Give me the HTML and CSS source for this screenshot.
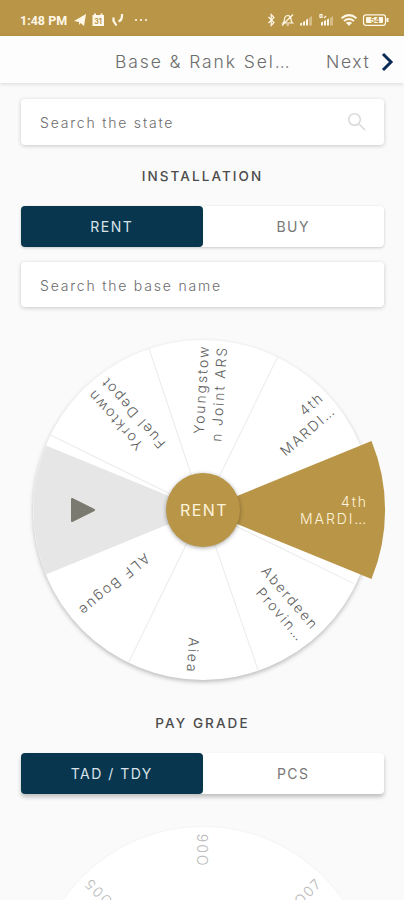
FILE: index.html
```html
<!DOCTYPE html>
<html lang="en">

<head>
    <meta charset="UTF-8">
    <meta name="viewport" content="width=device-width, initial-scale=1.0">
    <title>Base & Rank Selection</title>
    <link rel="stylesheet" href="styles.css">
</head>

<body>
    <div class="status-bar">
        <span class="time">1:48 PM</span>
        <svg class="status-left" width="76" height="14" viewBox="0 0 76 14">
            <path d="M0 8 L12 1 L10 13 L6.500 10 L5 12 V9 Z"/>
            <path d="M18.500 2 H30 V13 H18.500 Z M20 .5 h2 v2 h-2z M26.500 .5 h2 v2 h-2z"/>
            <text x="20.200" y="10.500" class="cal-day">31</text>
            <path class="line" d="M39.500 4.500 V8 L42.500 12.500 M44.500 8.500 Q48.500 7 48 1"/>
            <circle cx="62" cy="7" r="1.100"/>
            <circle cx="67" cy="7" r="1.100"/>
            <circle cx="72" cy="7" r="1.100"/>
        </svg>
        <svg class="status-right" width="124" height="14" viewBox="0 0 124 14">
            <path class="thin" d="M3.500 4 L9 9.500 L6.200 12.500 V1.500 L9 4.500 L3.500 10"/>
            <path class="thin" d="M18 10 Q19.500 9 19.500 6 Q20 2.500 23 2.500 Q26 3 26 6 Q26 9 27.500 10 Z M21.500 12 H24 M28 1.500 L17 12.500"/>
            <path d="M35 12.500 V10.500 L37 9.500 V12.500 Z M38 12.500 V9 L40 8 V12.500 Z M41 12.500 V7 L43 5.500 V12.500 Z"/>
            <path class="dim" d="M44 12.500 V5 L47 3 V12.500 Z"/>
            <path class="thin" d="M55 1.500 h2 v3 h-2 z M59 5 l2 -2"/>
            <path d="M56 12.500 V9.500 L58 8.500 V12.500 Z M59 12.500 V8 L61 7 V12.500 Z M62 12.500 V6.500 L64 5.500 V12.500 Z"/>
            <path class="dim" d="M65 12.500 V5 L68 3 V12.500 Z"/>
            <path class="wifi" d="M76.500 5.200 Q84 -1 91.500 5.200 M79 8 Q84 4 89 8 M81.500 10.500 Q84 8.800 86.500 10.500"/>
            <path d="M82 10.500 h4 l-2 2.500 z"/>
            <rect class="thin" x="98.500" y="1.800" width="22" height="10.500" rx="2.500"/>
            <rect x="101" y="4" width="17" height="6" rx="1"/>
            <text x="105.500" y="9.700" class="battery">54</text>
            <rect x="121.500" y="5" width="2" height="4"/>
        </svg>
    </div>

    <header class="header">
        <h1>Base &amp; Rank Sel…</h1>
        <span class="next">Next</span>
        <svg class="chevron" width="13" height="20" viewBox="0 0 13 20">
            <path d="M2 2 L10 10 L2 18"/>
        </svg>
    </header>

    <main class="container">
        <div class="field">
            <span>Search the state</span>
            <svg width="20" height="20" viewBox="0 0 20 20">
                <circle cx="7.500" cy="7.500" r="5.800"/>
                <path d="M11.800 11.800 L18 18"/>
            </svg>
        </div>

        <h2>INSTALLATION</h2>
        <div class="toggle">
            <button class="active">RENT</button>
            <button>BUY</button>
        </div>

        <div class="field base-field">
            <span>Search the base name</span>
        </div>

        <!-- slices are 45 degrees each, origin is the hub -->
        <svg class="wheel" width="364" height="364" viewBox="-182 -182 364 364">
            <circle class="disc" r="170"/>
            <g class="spokes">
                <path d="M0 0 L170 0" transform="rotate(-64)"/>
                <path d="M0 0 L170 0" transform="rotate(-108.500)"/>
                <path d="M0 0 L170 0" transform="rotate(-153.800)"/>
                <path d="M0 0 L170 0" transform="rotate(116)"/>
                <path d="M0 0 L170 0" transform="rotate(71)"/>
                <path d="M0 0 L168 0" transform="rotate(26)"/>
            </g>
            <path class="pointer-slice" d="M0 0 L-157 -64.500 A169.700 169.700 0 0 0 -157 64.500 Z"/>
            <path class="play" d="M-131 -11 L-109 0 L-131 11 Z"/>
            <path class="selected" d="M0 0 L168.500 -69 A182 182 0 0 1 168.500 69 Z"/>

            <g class="labels">
                <g transform="rotate(-41)">
                    <text x="165" y="-4">4th</text>
                    <text x="165" y="14">MARDI…</text>
                </g>
                <g transform="rotate(-86.500)">
                    <text x="165" y="-4">Youngstow</text>
                    <text x="165" y="14">n Joint ARS</text>
                </g>
                <g transform="rotate(-131.500)">
                    <text x="164" y="-1">Yorktown</text>
                    <text x="164" y="17">Fuel Depot</text>
                </g>
                <g transform="rotate(49)">
                    <text x="163" y="-3">Aberdeen</text>
                    <text x="163" y="15">Provin…</text>
                </g>
                <text x="164" y="5" transform="rotate(94)">Aiea</text>
                <text x="161" y="5" transform="rotate(140)">ALF Bogue</text>
                <g class="on-gold">
                    <text x="165" y="-3">4th</text>
                    <text x="165" y="14">MARDI…</text>
                </g>
            </g>

            <circle class="hub" r="37"/>
            <text class="hub-label" x="1" y="6">RENT</text>
        </svg>

        <h2 class="pay-title">PAY GRADE</h2>
        <div class="toggle raised">
            <button class="active">TAD / TDY</button>
            <button>PCS</button>
        </div>

        <svg class="wheel pay-wheel" width="364" height="364" viewBox="-182 -182 364 364">
            <circle class="disc" r="170"/>
            <g class="labels">
                <text x="165" y="5" transform="rotate(-135)">O05</text>
                <text x="165" y="5" transform="rotate(-90)">O06</text>
                <text x="165" y="5" transform="rotate(-45)">O07</text>
            </g>
        </svg>
    </main>
</body>

</html>
```
FILE: styles.css
```css
:root {
    --gold: #b99547;
    --navy: #08364f;
    --background: #fafafa;
    --text: #6c6c6c;
}

* {
    box-sizing: border-box;
}

body {
    font-family: Inter, Roboto, sans-serif;
    margin: 0;
    height: 900px;
    overflow: hidden;
    background-color: var(--background);
    color: var(--text);
    display: flex;
    flex-direction: column;
}

.status-bar {
    flex: none;
    height: 36px;
    background-color: var(--gold);
    color: #fff8e8;
    display: flex;
    align-items: center;
    padding: 4px 15px 0 20px;
}

.status-bar svg {
    fill: #fff8e8;
}

.time {
    font-family: Roboto, sans-serif;
    font-size: 12.5px;
    font-weight: 700;
    width: 54px;
    white-space: nowrap;
}

.status-right {
    margin-left: auto;
}

.status-bar .line {
    fill: none;
    stroke: #fff8e8;
    stroke-width: 2.2;
}

.status-bar .thin {
    fill: none;
    stroke: #fff8e8;
    stroke-width: 1.2;
}

.status-bar .wifi {
    fill: none;
    stroke: #fff8e8;
    stroke-width: 2;
}

.status-bar .dim {
    opacity: 0.4;
}

.status-bar .cal-day,
.status-bar .battery {
    fill: var(--gold);
    font-size: 7px;
    font-weight: 700;
}

.header {
    flex: none;
    height: 47px;
    background-color: #fdfdfd;
    box-shadow: 0 1px 4px rgba(0, 0, 0, 0.14);
    display: flex;
    align-items: center;
    padding: 4px 10px 0 115px;
}

.header h1,
.next {
    margin: 0;
    font-size: 17.5px;
    font-weight: 300;
    letter-spacing: 1.9px;
    white-space: nowrap;
}

.header h1 {
    width: 211px;
}

.next {
    letter-spacing: 1.6px;
}

.chevron {
    margin-left: auto;
    fill: none;
    stroke: #0b2a55;
    stroke-width: 3;
}

.container {
    flex: none;
    padding: 16px 20px 0 21px;
    display: flex;
    flex-direction: column;
}

.field {
    height: 46px;
    background-color: #fff;
    border-radius: 4px;
    box-shadow: 0 1px 4px rgba(0, 0, 0, 0.2);
    display: flex;
    align-items: center;
    justify-content: space-between;
    padding: 0 17px 0 19px;
    font-size: 14px;
    font-weight: 300;
    letter-spacing: 1.8px;
}

.field svg {
    fill: none;
    stroke: #dadada;
    stroke-width: 1.6;
}

h2 {
    margin: 21px 0;
    height: 19px;
    line-height: 20px;
    text-align: center;
    font-size: 13.5px;
    font-weight: 500;
    letter-spacing: 2.1px;
    color: #4b4b4b;
}

.toggle {
    display: flex;
    height: 41px;
    background-color: #fff;
    border-radius: 4px;
    box-shadow: 0 1px 3px rgba(0, 0, 0, 0.2);
}

.toggle.raised {
    box-shadow: 0 3px 4px rgba(0, 0, 0, 0.24);
}

.toggle button {
    flex: 1;
    border: none;
    border-radius: 4px;
    padding: 0 0 1px;
    background: transparent;
    font-family: inherit;
    font-size: 14px;
    font-weight: 400;
    letter-spacing: 1.5px;
    color: #777;
}

.toggle .active {
    background-color: var(--navy);
    color: #d9e2e8;
}

.base-field {
    margin-top: 15px;
    height: 45px;
    padding-top: 1px;
}

.wheel {
    align-self: center;
    flex: none;
    margin-top: 21px;
    overflow: visible;
}

.disc {
    fill: #fff;
    filter: drop-shadow(0 2px 2px rgba(0, 0, 0, 0.25));
}

.spokes path {
    stroke: #ebebeb;
    stroke-width: 1;
}

.pointer-slice {
    fill: #e6e6e6;
}

.play {
    fill: #7b7a70;
    stroke: #7b7a70;
    stroke-width: 2;
    stroke-linejoin: round;
}

.selected {
    fill: var(--gold);
}

.labels text {
    fill: #606060;
    font-size: 14px;
    font-weight: 300;
    letter-spacing: 1.9px;
    text-anchor: end;
}

.labels .on-gold text {
    fill: #fff3da;
    font-weight: 300;
}

.hub {
    fill: var(--gold);
    filter: drop-shadow(0 1px 2px rgba(0, 0, 0, 0.35));
}

.hub-label {
    fill: #fff3da;
    font-size: 16px;
    letter-spacing: 1.4px;
    text-anchor: middle;
}

.pay-title {
    margin-top: 21px;
}

.pay-wheel .disc {
    filter: drop-shadow(0 0 1px rgba(0, 0, 0, 0.06));
}

.pay-wheel .labels text {
    fill: #b8b8b8;
}
```
